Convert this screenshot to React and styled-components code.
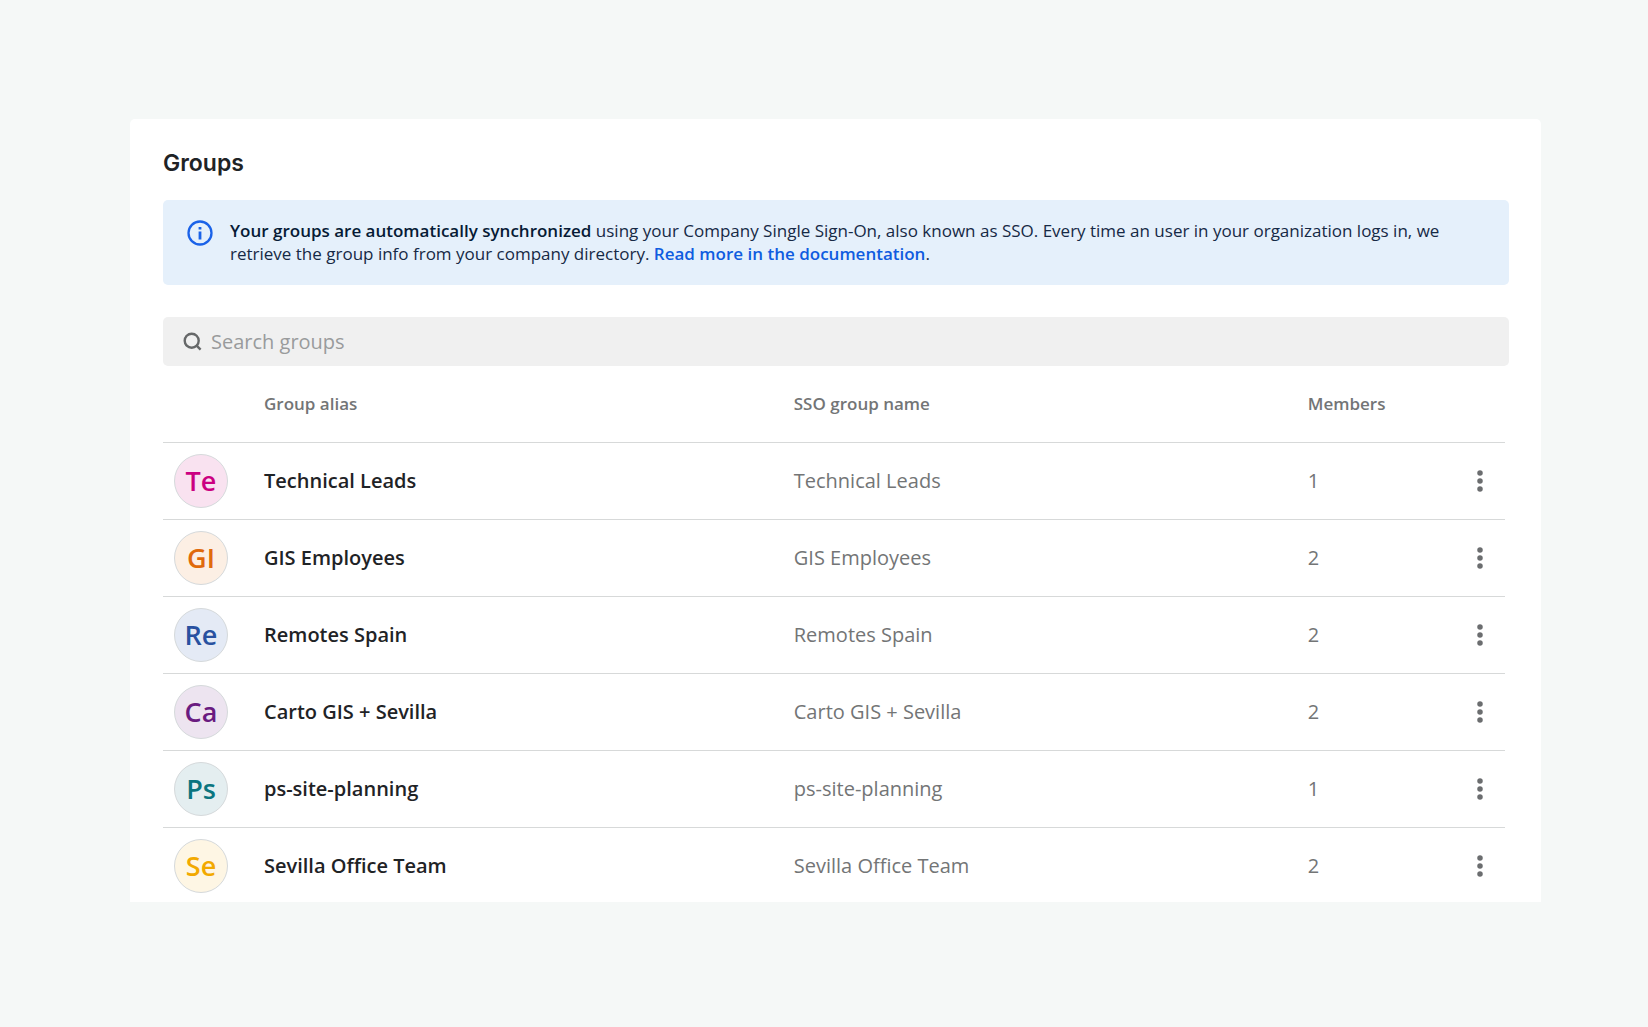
import React from "react";
import styled, { createGlobalStyle } from "styled-components";

const GlobalStyle = createGlobalStyle`
  *, *::before, *::after { box-sizing: border-box; }
  body {
    margin: 0;
    background: #f5f8f7;
    color: #1f2326;
    font-family: "Open Sans", "Noto Sans", sans-serif;
  }
`;

const Page = styled.div`
  display: flex;
  height: 100vh;
  padding: 119px 107px 125px 130px;
`;

const Card = styled.main`
  flex: 1;
  min-width: 0;
  overflow: hidden;
  padding: 28px 32px 0 33px;
  border-radius: 5px 5px 0 0;
  background: #fff;
`;

const Title = styled.h1`
  margin: 0 0 21px;
  font-family: Inter, sans-serif;
  font-size: 23px;
  font-weight: 600;
  line-height: 32px;
`;

const Banner = styled.section`
  display: flex;
  gap: 17px;
  padding: 19px 24px 20px;
  border-radius: 5px;
  background: #e5f0fb;
  color: #162945;
`;

const InfoIcon = styled.svg`
  flex: none;
  width: 26px;
  height: 28px;
`;

const BannerText = styled.p`
  margin: 0;
  padding-right: 24px;
  font-size: 17px;
  line-height: 23px;

  strong {
    color: #061a35;
    font-weight: 600;
  }
`;

const DocLink = styled.a`
  color: #0f5ce0;
  font-weight: 600;
  text-decoration: none;
`;

const SearchBox = styled.label`
  display: flex;
  align-items: center;
  gap: 9px;
  height: 49px;
  margin-top: 32px;
  padding: 0 20px;
  border-radius: 5px;
  background: #f0f0f0;
`;

const SearchIcon = styled.svg`
  flex: none;
  width: 19px;
  height: 19px;
`;

const SearchInput = styled.input`
  flex: 1;
  min-width: 0;
  padding: 0;
  border: 0;
  outline: 0;
  background: transparent;
  color: #1f2326;
  font: inherit;
  font-size: 20px;

  &::placeholder {
    color: #999b9c;
    opacity: 1;
  }
`;

const TableWrap = styled.div`
  padding-right: 4px;
`;

const Table = styled.table`
  width: 100%;
  table-layout: fixed;
  border-collapse: collapse;
  text-align: left;
`;

const Col = styled.col`
  width: ${(p) => p.$width};
`;

const HeadCell = styled.th`
  height: 76px;
  padding: 0;
  border-bottom: 1px solid #d7d9d9;
  color: #737576;
  font-size: 17px;
  font-weight: 600;
  line-height: 24px;
`;

const Cell = styled.td`
  height: 77px;
  padding: ${(p) => (p.$avatar ? "0 0 0 11px" : "0")};
  border-bottom: 1px solid #d7d9d9;
  color: ${(p) => (p.$strong ? "#1f2326" : "#737576")};
  font-size: 20px;
  font-weight: ${(p) => (p.$strong ? 600 : 400)};
  line-height: 28px;
`;

const ActionCell = styled(Cell)`
  padding-right: 9px;
  text-align: right;
`;

const Avatar = styled.span`
  display: flex;
  align-items: center;
  justify-content: center;
  width: 54px;
  height: 54px;
  border: 1px solid #d5d9db;
  border-radius: 50%;
  background: ${(p) => p.$bg};
  color: ${(p) => p.$fg};
  font-size: 27px;
  font-weight: 600;
  line-height: 32px;
`;

const MenuButton = styled.button`
  display: inline-flex;
  align-items: center;
  justify-content: center;
  width: 32px;
  height: 32px;
  padding: 0;
  border: 0;
  background: transparent;
  color: #6b6d6f;
  vertical-align: middle;
  cursor: pointer;
`;

const groups = [
  { name: "Technical Leads", members: 1, initials: "Te", fg: "#cb0081", bg: "#f9e2f0" },
  { name: "GIS Employees", members: 2, initials: "GI", fg: "#e06a0c", bg: "#fcefe4" },
  { name: "Remotes Spain", members: 2, initials: "Re", fg: "#2851a0", bg: "#e4eaf5" },
  { name: "Carto GIS + Sevilla", members: 2, initials: "Ca", fg: "#6a1b80", bg: "#ede4f0" },
  { name: "ps-site-planning", members: 1, initials: "Ps", fg: "#0b7580", bg: "#e4eef0" },
  { name: "Sevilla Office Team", members: 2, initials: "Se", fg: "#f2a900", bg: "#fef6e4" },
];

function GroupRow({ group }) {
  return (
    <tr>
      <Cell $avatar>
        <Avatar $bg={group.bg} $fg={group.fg}>{group.initials}</Avatar>
      </Cell>
      <Cell $strong>{group.name}</Cell>
      <Cell>{group.name}</Cell>
      <Cell>{group.members}</Cell>
      <ActionCell>
        <MenuButton type="button" aria-label={`Options for ${group.name}`}>
          <svg width="6" height="22" viewBox="0 0 6 22" fill="currentColor" aria-hidden="true">
            <circle cx="3" cy="3" r="2.75" />
            <circle cx="3" cy="11" r="2.75" />
            <circle cx="3" cy="19" r="2.75" />
          </svg>
        </MenuButton>
      </ActionCell>
    </tr>
  );
}

export default function App() {
  return (
    <>
      <GlobalStyle />
      <Page>
        <Card>
          <Title>Groups</Title>
          <Banner>
            <InfoIcon viewBox="0 0 26 28" fill="none" aria-hidden="true">
              <circle cx="13" cy="14" r="11.5" stroke="#1a62e8" strokeWidth="2.3" />
              <path d="M11.6 7.9h2.8v2.5h-2.8zM11.6 12.6h2.8v8h-2.8z" fill="#1a62e8" />
            </InfoIcon>
            <BannerText>
              <strong>Your groups are automatically synchronized</strong> using your Company Single
              Sign-On, also known as SSO. Every time an user in your organization logs in, we
              retrieve the group info from your company directory.{" "}
              <DocLink href="#documentation">Read more in the documentation</DocLink>.
            </BannerText>
          </Banner>
          <SearchBox htmlFor="group-search">
            <SearchIcon viewBox="0 0 19 19" fill="none" stroke="#666869" strokeWidth="2.4" aria-hidden="true">
              <circle cx="8.7" cy="8.7" r="7" />
              <path d="M13.4 13.4l4.2 4.2" />
            </SearchIcon>
            <SearchInput id="group-search" type="text" placeholder="Search groups" aria-label="Search groups" />
          </SearchBox>
          <TableWrap>
            <Table>
              <colgroup>
                <Col $width="101px" />
                <Col />
                <Col $width="38.3%" />
                <Col $width="6.3%" />
                <Col $width="8.4%" />
              </colgroup>
              <thead>
                <tr>
                  <HeadCell aria-label="Avatar" />
                  <HeadCell scope="col">Group alias</HeadCell>
                  <HeadCell scope="col">SSO group name</HeadCell>
                  <HeadCell scope="col">Members</HeadCell>
                  <HeadCell aria-label="Actions" />
                </tr>
              </thead>
              <tbody>
                {groups.map((group) => (
                  <GroupRow key={group.name} group={group} />
                ))}
              </tbody>
            </Table>
          </TableWrap>
        </Card>
      </Page>
    </>
  );
}
